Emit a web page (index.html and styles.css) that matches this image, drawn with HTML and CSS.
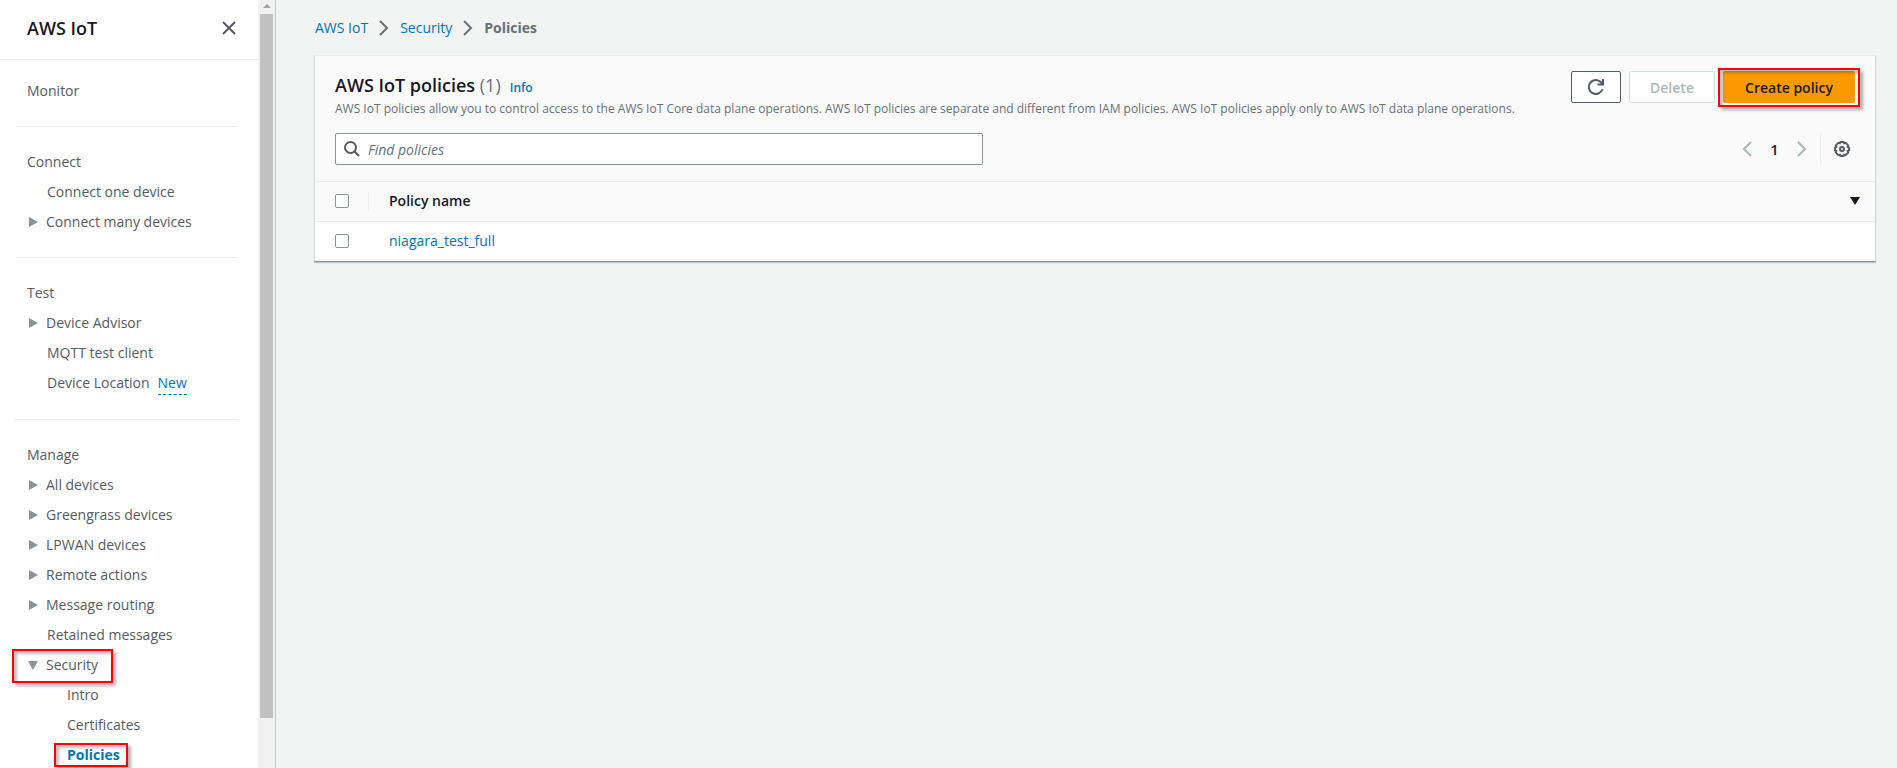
FILE: index.html
```html
<!DOCTYPE html>
<html lang="en">
<head>
    <meta charset="utf-8">
    <title>AWS IoT policies</title>
    <link rel="stylesheet" href="styles.css">
</head>
<body>

    <aside class="sidebar">
        <nav class="nav">
            <div class="nav-header">
                <h2>AWS IoT</h2>
                <button type="button" class="close" aria-label="Close navigation">
                    <svg width="16" height="16" viewBox="0 0 16 16"><path d="M2 2l12 12M14 2L2 14"/></svg>
                </button>
            </div>

            <ul class="section first">
                <li><a href="#">Monitor</a></li>
            </ul>

            <ul class="section">
                <li>Connect</li>
                <li class="child"><a href="#">Connect one device</a></li>
                <li class="group"><span class="arrow"></span><a href="#">Connect many devices</a></li>
            </ul>

            <ul class="section">
                <li>Test</li>
                <li class="group"><span class="arrow"></span><a href="#">Device Advisor</a></li>
                <li class="child"><a href="#">MQTT test client</a></li>
                <li class="child has-badge"><a href="#">Device Location</a><a href="#" class="new">New</a></li>
            </ul>

            <ul class="section">
                <li>Manage</li>
                <li class="group"><span class="arrow"></span><a href="#">All devices</a></li>
                <li class="group"><span class="arrow"></span><a href="#">Greengrass devices</a></li>
                <li class="group"><span class="arrow"></span><a href="#">LPWAN devices</a></li>
                <li class="group"><span class="arrow"></span><a href="#">Remote actions</a></li>
                <li class="group"><span class="arrow"></span><a href="#">Message routing</a></li>
                <li class="child"><a href="#">Retained messages</a></li>
                <li class="group marked mark-security"><span class="arrow open"></span><a href="#">Security</a></li>
                <li class="grandchild"><a href="#">Intro</a></li>
                <li class="grandchild"><a href="#">Certificates</a></li>
                <li class="grandchild marked mark-policies"><a href="#" class="active">Policies</a></li>
            </ul>
        </nav>
        <div class="scrollbar">
            <span class="scroll-up"></span>
            <div class="thumb"></div>
        </div>
    </aside>

    <main class="content">
        <nav class="breadcrumb">
            <a href="#">AWS IoT</a>
            <svg width="10" height="16" viewBox="0 0 10 16"><path d="M1 1l7 7-7 7"/></svg>
            <a href="#">Security</a>
            <svg width="10" height="16" viewBox="0 0 10 16"><path d="M1 1l7 7-7 7"/></svg>
            <span>Policies</span>
        </nav>

        <section class="panel">
            <div class="panel-top">
                <div class="title-row">
                    <div class="title">
                        <h1>AWS IoT policies <span class="count">(1)</span></h1>
                        <a href="#" class="info">Info</a>
                        <p>AWS IoT policies allow you to control access to the AWS IoT Core data plane operations. AWS IoT policies are separate and different from IAM policies. AWS IoT policies apply only to AWS IoT data plane operations.</p>
                    </div>
                    <div class="buttons">
                        <button type="button" class="btn refresh" aria-label="Refresh">
                            <svg width="18" height="18" viewBox="0 0 18 18"><path d="M15.500 11.200A7 7 0 1 1 14 4.200L16 6M16 1v5.500h-5.500"/></svg>
                        </button>
                        <button type="button" class="btn delete" disabled>Delete</button>
                        <div class="marked mark-create">
                            <button type="button" class="btn create">Create policy</button>
                        </div>
                    </div>
                </div>

                <div class="filter-row">
                    <label class="search">
                        <svg width="16" height="16" viewBox="0 0 16 16"><circle cx="6.500" cy="6.500" r="5.500"/><path d="M10.500 10.500L15 15"/></svg>
                        <input type="text" placeholder="Find policies" aria-label="Find policies">
                    </label>
                    <div class="pagination">
                        <button type="button" class="page-btn" aria-label="Previous page" disabled>
                            <svg width="10" height="16" viewBox="0 0 10 16"><path d="M9 1L2 8l7 7"/></svg>
                        </button>
                        <button type="button" class="page-number">1</button>
                        <button type="button" class="page-btn" aria-label="Next page" disabled>
                            <svg width="10" height="16" viewBox="0 0 10 16"><path d="M1 1l7 7-7 7"/></svg>
                        </button>
                        <button type="button" class="settings" aria-label="Preferences">
                            <svg width="16" height="16" viewBox="0 0 16 16">
                                <path d="M6.500 1h3l.6 1.300 1.500-.5 2.600 2.600-.5 1.500 1.300.6v3l-1.300.6.5 1.500-2.600 2.600-1.500-.5-.6 1.300h-3l-.6-1.300-1.500.5-2.600-2.600.5-1.500L1 9.500v-3l1.300-.6-.5-1.500 2.600-2.600 1.500.5z"/>
                                <circle cx="8" cy="8" r="2"/>
                            </svg>
                        </button>
                    </div>
                </div>
            </div>

            <table class="policies">
                <thead>
                    <tr>
                        <th class="check"><input type="checkbox" aria-label="Select all policies"></th>
                        <th><div class="name-head">Policy name <span class="sort"></span></div></th>
                    </tr>
                </thead>
                <tbody>
                    <tr>
                        <td class="check"><input type="checkbox" aria-label="Select niagara_test_full"></td>
                        <td><a href="#">niagara_test_full</a></td>
                    </tr>
                </tbody>
            </table>
        </section>
    </main>

</body>
</html>
```
FILE: styles.css
```css
*, *::after {
    box-sizing: border-box;
}

body {
    display: flex;
    height: 100vh;
    margin: 0;
    overflow: hidden;
    background-color: #f2f3f3;
    font-family: "Open Sans", "Noto Sans", sans-serif;
    font-size: 14px;
    line-height: 22px;
    color: #16191f;
}

a {
    color: #0073bb;
    text-decoration: none;
}

button, input {
    font-family: inherit;
    font-size: 14px;
}

button {
    cursor: pointer;
}

svg {
    display: block;
    fill: none;
    stroke: #545b64;
    stroke-width: 2;
}

/* Side navigation */
.sidebar {
    display: flex;
    flex: none;
    width: 276px;
    overflow: hidden;
    background-color: white;
    border-right: 1px solid #c4c8c8;
}

.nav {
    flex: 1;
}

.nav-header {
    display: flex;
    justify-content: space-between;
    align-items: center;
    height: 60px;
    padding: 0 21px 4px 27px;
    border-bottom: 1px solid #eaeded;
}

.nav-header h2 {
    margin: 0;
    font-size: 18px;
    font-weight: 600;
}

.close {
    padding: 0;
    border: none;
    background: none;
}

.section {
    margin: 0 20px 0 15px;
    padding: 20px 0 20px 12px;
    list-style: none;
    color: #545b64;
    border-bottom: 1px solid #eaeded;
}

.section.first {
    padding-top: 16px;
}

.section li {
    display: flex;
    align-items: center;
    height: 30px;
}

.section .has-badge {
    align-items: flex-start;
    height: 31px;
    padding-top: 4px;
}

.section a {
    color: #545b64;
}

.section .child {
    padding-left: 20px;
}

.section .grandchild {
    padding-left: 40px;
}

.section .active {
    color: #0073bb;
    font-weight: 700;
}

.section .new {
    margin-left: 8px;
    border-bottom: 1px dashed #0073bb;
    color: #0073bb;
}

.arrow {
    width: 9px;
    margin: 0 8px 0 2px;
    border-left: 9px solid #879596;
    border-top: 5px solid transparent;
    border-bottom: 5px solid transparent;
}

.arrow.open {
    width: 10px;
    margin: 0 8px 0 1px;
    border-left: 5px solid transparent;
    border-right: 5px solid transparent;
    border-top: 9px solid #879596;
    border-bottom: none;
}

.scrollbar {
    display: flex;
    flex-direction: column;
    align-items: center;
    width: 17px;
    height: 100vh;
    background-color: #f1f1f1;
}

.scroll-up {
    margin: 4px 0 6px;
    border-left: 4px solid transparent;
    border-right: 4px solid transparent;
    border-bottom: 4px solid #a3a3a3;
}

.thumb {
    width: 13px;
    height: 93%;
    margin-bottom: 50px;
    background-color: #c1c1c1;
}

/* Red callout boxes */
.marked {
    position: relative;
}

.marked::after {
    content: "";
    position: absolute;
    border: 2px solid #f00;
    box-shadow: 3px 3px 3px rgba(0, 0, 0, 0.3), inset 3px 3px 3px rgba(0, 0, 0, 0.25);
    pointer-events: none;
}

.mark-security::after {
    top: -1px;
    left: -15px;
    width: 101px;
    height: 34px;
}

.mark-policies::after {
    top: 3px;
    left: 27px;
    width: 74px;
    height: 24px;
}

.mark-create::after {
    top: -3px;
    left: -5px;
    right: -5px;
    bottom: -4px;
}

/* Main area */
.content {
    flex: 1;
    min-width: 0;
    padding: 17px 21px 0 38px;
}

.breadcrumb {
    display: flex;
    align-items: center;
    gap: 11px;
    height: 22px;
    margin: 0 0 16px 1px;
}

.breadcrumb svg {
    stroke: #687078;
}

.breadcrumb span {
    color: #687078;
    font-weight: 700;
}

.panel {
    background-color: white;
    border: 1px solid #d5dbdb;
    border-top-color: #eaeded;
    border-bottom-color: #879596;
    box-shadow: 0 1px 1px rgba(0, 28, 36, 0.2);
}

.panel-top {
    padding: 15px 20px 16px;
    background-color: #fafafa;
    border-bottom: 1px solid #eaeded;
}

.title-row {
    display: flex;
    justify-content: space-between;
    height: 47px;
    margin-bottom: 15px;
}

.title {
    display: flex;
    flex-wrap: wrap;
    align-items: baseline;
    align-content: flex-start;
    flex: 1;
    column-gap: 9px;
}

.title h1 {
    margin: 2px 0 0;
    font-size: 18px;
    line-height: 24px;
    font-weight: 600;
}

.title .count {
    color: #687078;
    font-weight: 400;
}

.title .info {
    font-size: 12px;
    font-weight: 600;
}

.title p {
    width: 100%;
    margin: 0;
    font-size: 12px;
    line-height: 20px;
    color: #687078;
}

.buttons {
    display: flex;
    gap: 8px;
    height: 32px;
}

.btn {
    height: 32px;
    padding: 0 20px;
    border: 1px solid #545b64;
    border-radius: 2px;
    background-color: white;
    font-weight: 600;
    white-space: nowrap;
}

.refresh {
    width: 50px;
    padding: 0 15px;
}

.delete {
    width: 86px;
    border-color: #d5dbdb;
    color: #aab7b8;
}

.create {
    width: 132px;
    border-color: #ff9900;
    background-color: #ff9900;
    color: #16191f;
}

.filter-row {
    display: flex;
    justify-content: space-between;
}

.search {
    display: flex;
    align-items: center;
    width: 648px;
    height: 32px;
    padding-left: 8px;
    gap: 8px;
    background-color: white;
    border: 1px solid #879596;
    border-radius: 2px;
}

.search input {
    flex: 1;
    padding: 0;
    border: none;
    outline: none;
    background: none;
}

.search input::placeholder {
    color: #687078;
    font-style: italic;
}

.pagination {
    display: flex;
    align-items: center;
}

.pagination button {
    padding: 0;
    border: none;
    background: none;
}

.page-btn svg {
    stroke: #aab7b8;
}

.pagination .page-number {
    width: 45px;
    color: #16191f;
    font-weight: 600;
}

.pagination .settings {
    height: 32px;
    margin-left: 13px;
    padding: 0 5px 0 13px;
    border-left: 1px solid #eaeded;
}

.policies {
    width: 100%;
    border-collapse: collapse;
    text-align: left;
}

.policies th {
    height: 39px;
    padding: 0 15px 0 20px;
    background-color: #fafafa;
    border-bottom: 1px solid #eaeded;
    font-weight: 600;
}

.policies td {
    height: 40px;
    padding: 0 15px 0 20px;
}

.policies .check {
    width: 54px;
}

/* short divider beside the select-all box */
.policies th.check {
    background: linear-gradient(#eaeded, #eaeded) right center / 1px 19px no-repeat #fafafa;
}

.policies input {
    display: block;
    appearance: none;
    width: 14px;
    height: 14px;
    margin: 0;
    border: 1px solid #879596;
    border-radius: 2px;
    background-color: white;
}

.name-head {
    display: flex;
    justify-content: space-between;
    align-items: center;
}

.sort {
    border-left: 5px solid transparent;
    border-right: 5px solid transparent;
    border-top: 8px solid #16191f;
}
```
